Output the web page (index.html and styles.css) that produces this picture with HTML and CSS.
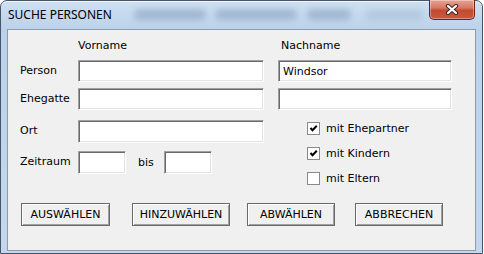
FILE: index.html
```html
<!DOCTYPE html>
<html lang="de">
<head>
    <meta charset="UTF-8">
    <title>Suche Personen</title>
    <link rel="stylesheet" href="styles.css">
</head>
<body>
    <div class="window">
        <div class="titlebar">
            <span class="title">SUCHE PERSONEN</span>
            <span class="haze haze-1"></span>
            <span class="haze haze-2"></span>
            <span class="haze haze-3"></span>
            <span class="haze haze-4"></span>
            <button class="close" title="Schließen">
                <svg width="14" height="11" viewBox="0 0 14 11">
                    <path d="M3 2 L11 9 M11 2 L3 9" stroke="#3a2622" stroke-width="4.2" stroke-linecap="round"/>
                    <path d="M3 2 L11 9 M11 2 L3 9" stroke="#fff" stroke-width="2.2" stroke-linecap="round"/>
                </svg>
            </button>
        </div>

        <div class="client">
            <div class="form">
                <div class="head col-a">Vorname</div>
                <div class="head col-b">Nachname</div>

                <label class="lbl">Person</label>
                <input class="field col-a" type="text">
                <input class="field col-b" type="text" value="Windsor">

                <label class="lbl">Ehegatte</label>
                <input class="field col-a" type="text">
                <input class="field col-b" type="text">

                <label class="lbl">Ort</label>
                <input class="field col-a tall" type="text">
                <div class="checks col-b">
                    <div class="check"><span class="box"><svg width="11" height="11" viewBox="0 0 11 11"><path d="M2.5 5 L4.5 7.2 L8.8 2.8" stroke="#000" stroke-width="2" fill="none"/></svg></span>mit Ehepartner</div>
                    <div class="check"><span class="box"><svg width="11" height="11" viewBox="0 0 11 11"><path d="M2.5 5 L4.5 7.2 L8.8 2.8" stroke="#000" stroke-width="2" fill="none"/></svg></span>mit Kindern</div>
                    <div class="check"><span class="box"></span>mit Eltern</div>
                </div>

                <label class="lbl">Zeitraum</label>
                <div class="period col-a">
                    <input class="field small" type="text">
                    <span class="bis">bis</span>
                    <input class="field small" type="text">
                </div>
            </div>

            <div class="buttons">
                <button class="btn">AUSWÄHLEN</button>
                <button class="btn btn-add">HINZUWÄHLEN</button>
                <button class="btn btn-remove">ABWÄHLEN</button>
                <button class="btn btn-cancel">ABBRECHEN</button>
            </div>
        </div>
    </div>
</body>
</html>
```

FILE: styles.css
```css
body {
    margin: 0;
    background: #fff;
    font-family: 'DejaVu Sans', sans-serif;
    font-size: 11px;
    color: #000;
}

.window {
    width: 483px;
    height: 254px;
    box-sizing: border-box;
    border: 1px solid #46566a;
    border-radius: 7px 7px 0 0;
    padding: 0 6px 2px 6px;
    background: linear-gradient(to bottom, #cfe0f2, #bcd2ea 28px, #c4d7ec);
    box-shadow: inset 0 1px 0 rgba(255, 255, 255, 0.7);
    display: flex;
    flex-direction: column;
}

/* title bar */
.titlebar {
    height: 28px;
    display: flex;
    align-items: center;
}
.title {
    font-family: 'Noto Sans', sans-serif;
    font-size: 12px;
    padding-left: 1px;
    padding-bottom: 2px;
    color: #000;
}
.haze {
    height: 11px;
    border-radius: 5px;
    background: rgba(70, 100, 140, 0.28);
    filter: blur(3px);
    margin-bottom: 1px;
}
.haze-1 { width: 72px; margin-left: 22px; }
.haze-2 { width: 82px; margin-left: 9px; }
.haze-3 { width: 44px; margin-left: 10px; }
.haze-4 { width: 58px; margin-left: 14px; opacity: 0.5; }

.close {
    margin-left: auto;
    margin-right: 1px;
    align-self: flex-start;
    margin-top: -1px;
    width: 46px;
    height: 20px;
    padding: 0;
    border: 1px solid #6a2418;
    border-top: none;
    border-radius: 0 0 5px 5px;
    background: linear-gradient(to bottom, #e7a596 0%, #d67a66 40%, #c44a30 55%, #c65a42 100%);
    box-shadow: inset 0 0 0 1px rgba(255, 255, 255, 0.35);
    display: flex;
    align-items: center;
    justify-content: center;
}

/* client area */
.client {
    flex: 1;
    border: 1px solid #8e9aab;
    background: #f0f0f0;
    padding: 9px 0 0 12px;
}

.form {
    display: grid;
    grid-template-columns: 58px 186px 14px 174px;
    grid-template-rows: 21px 28px 32px 31px 23px;
    align-items: start;
}
.col-a { grid-column: 2; }
.col-b { grid-column: 4; }

.head { line-height: 13px; }
.head.col-b { padding-left: 3px; }

.lbl {
    grid-column: 1;
    height: 21px;
    display: flex;
    align-items: center;
}

.field {
    box-sizing: border-box;
    width: 100%;
    height: 22px;
    margin: 0;
    padding: 0 4px;
    font: inherit;
    color: #000;
    background: #fff;
    border: 1px solid;
    border-color: #a0a0a0 #fff #fff #a0a0a0;
    box-shadow: inset 1px 1px 0 #696969, inset -1px -1px 0 #e3e3e3;
    outline: none;
}
.field.tall { height: 23px; }
.field.small { width: 48px; height: 23px; }

.period {
    display: flex;
    align-items: center;
}
.bis {
    margin: 0 10px 1px 12px;
}

/* check boxes */
.checks {
    grid-row: 4 / 6;
    margin-top: 2px;
    padding-left: 29px;
}
.check {
    height: 25px;
    display: flex;
    align-items: flex-start;
    line-height: 13px;
}
.box {
    box-sizing: border-box;
    width: 13px;
    height: 13px;
    margin-right: 6px;
    background: #fff;
    border: 1px solid #8a8a8a;
    display: flex;
    align-items: center;
    justify-content: center;
}

/* buttons */
.buttons {
    display: flex;
    margin-top: 29px;
    padding-left: 1px;
}
.btn {
    width: 88px;
    height: 23px;
    padding: 0;
    font: inherit;
    color: #000;
    background: #f0f0f0;
    border: 1px solid #696969;
    box-shadow: inset 1px 1px 0 #fff, inset -1px -1px 0 #a0a0a0;
}
.btn:first-child { width: 89px; }
.btn-add { width: 98px; margin-left: 22px; }
.btn-remove { margin-left: 17px; }
.btn-cancel { margin-left: 20px; }
```
